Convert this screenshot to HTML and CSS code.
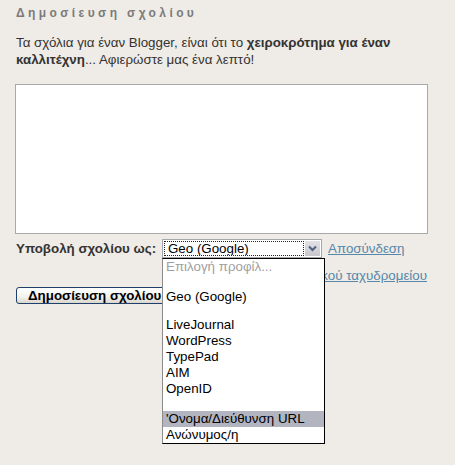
FILE: index.html
```html
<!DOCTYPE html>
<html lang="el">
<head>
<meta charset="utf-8">
<title>Δημοσίευση σχολίου</title>
<link rel="stylesheet" href="styles.css">
</head>
<body>
<div class="comment-form">
  <h4 class="title">Δημοσίευση σχολίου</h4>
  <p class="intro">Τα σχόλια για έναν Blogger, είναι ότι το <b>χειροκρότημα για έναν καλλιτέχνη</b>... Αφιερώστε μας ένα λεπτό!</p>
  <div class="textarea"></div>
  <div class="identity-row">
    <span class="label">Υποβολή σχολίου ως:</span>
    <div class="select">
      <span class="select-value"><span>Geo (Google)</span></span>
      <span class="select-btn">
        <svg width="9" height="7" viewBox="0 0 9 7"><path d="M1 1.5 L4.5 5 L8 1.5" fill="none" stroke="#4d6185" stroke-width="2"/></svg>
      </span>
      <ul class="dropdown">
        <li class="opt placeholder">Επιλογή προφίλ...</li>
        <li class="sep s14"></li>
        <li class="opt">Geo (Google)</li>
        <li class="sep s12"></li>
        <li class="opt">LiveJournal</li>
        <li class="opt">WordPress</li>
        <li class="opt">TypePad</li>
        <li class="opt">AIM</li>
        <li class="opt">OpenID</li>
        <li class="sep s14"></li>
        <li class="opt selected">'Ονομα/Διεύθυνση URL</li>
        <li class="opt">Ανώνυμος/η</li>
      </ul>
    </div>
    <a class="link" href="#">Αποσύνδεση</a>
  </div>
  <div class="subscribe-row"><a class="link" href="#">Εγγραφή μέσω ηλεκτρονικού ταχυδρομείου</a></div>
  <div class="button-row"><button class="xp-btn">Δημοσίευση σχολίου</button></div>
</div>
</body>
</html>
```

FILE: styles.css
```css
html, body {
  margin: 0;
  padding: 0;
  background: #efebe6;
}
body {
  min-height: 465px;
  font-family: "Liberation Sans", Arial, sans-serif;
  font-size: 13.33px;
  color: #333;
}
.comment-form {
  width: 413px;
  padding: 6px 0 0 15px;
}
.title {
  margin: 0 0 0 1px;
  font-size: 12px;
  line-height: 14px;
  font-weight: bold;
  color: #7b7b7b;
  letter-spacing: 3.4px;
}
.intro {
  margin: 14px 0 0 1px;
  line-height: 17px;
}
.intro b { color: #333; }
.textarea {
  margin-top: 16px;
  height: 148px;
  border: 1px solid #a9a9a9;
  background: #fff;
}
.identity-row {
  margin-top: 5px;
  display: flex;
  align-items: center;
  height: 19px;
}
.label {
  font-weight: bold;
  margin-left: 1px;
  width: 146px;
}
.select {
  position: relative;
  width: 158px;
  height: 17px;
  border: 1px solid #a7a6aa;
  background: #fff;
  display: flex;
}
.select-value {
  flex: 1;
  margin: 1px;
  border: 1px dotted #222;
  line-height: 13px;
  padding-left: 3px;
  color: #000;
  display: flex;
  align-items: center;
  overflow: hidden;
  white-space: nowrap;
}
.select-btn {
  width: 15px;
  margin: 1px 1px 1px 0;
  background: linear-gradient(#e3e3e6, #c6c6cc);
  display: flex;
  align-items: center;
  justify-content: center;
}
.dropdown {
  position: absolute;
  left: -1px;
  top: 18px;
  width: 161px;
  margin: 0;
  padding: 0;
  list-style: none;
  background: #fff;
  border: 1px solid #000;
  border-left-color: #8c8c8c;
  z-index: 5;
}
.opt {
  height: 16px;
  line-height: 16px;
  padding-left: 3px;
  color: #000;
  white-space: nowrap;
}
.opt.placeholder { color: #a0a0a0; }
.opt.selected { background: #b2b4bf; }
.sep.s14 { height: 14px; }
.sep.s12 { height: 12px; }
.link {
  color: #5588aa;
  text-decoration: underline;
}
.identity-row .link { margin-left: 6px; }
.subscribe-row {
  margin-top: 10px;
  text-align: right;
  padding-right: 1px;
  line-height: 16px;
}
.button-row {
  margin-top: 3px;
  margin-left: 1px;
  display: flex;
}
.xp-btn {
  font-family: "Liberation Sans", Arial, sans-serif;
  font-size: 13.33px;
  font-weight: bold;
  color: #000;
  height: 17px;
  padding: 0 11px;
  border: 1px solid #1f3f6d;
  border-radius: 3px;
  background: linear-gradient(#ffffff, #f2f2ee 60%, #d9d6cc);
  line-height: 14px;
}
```
